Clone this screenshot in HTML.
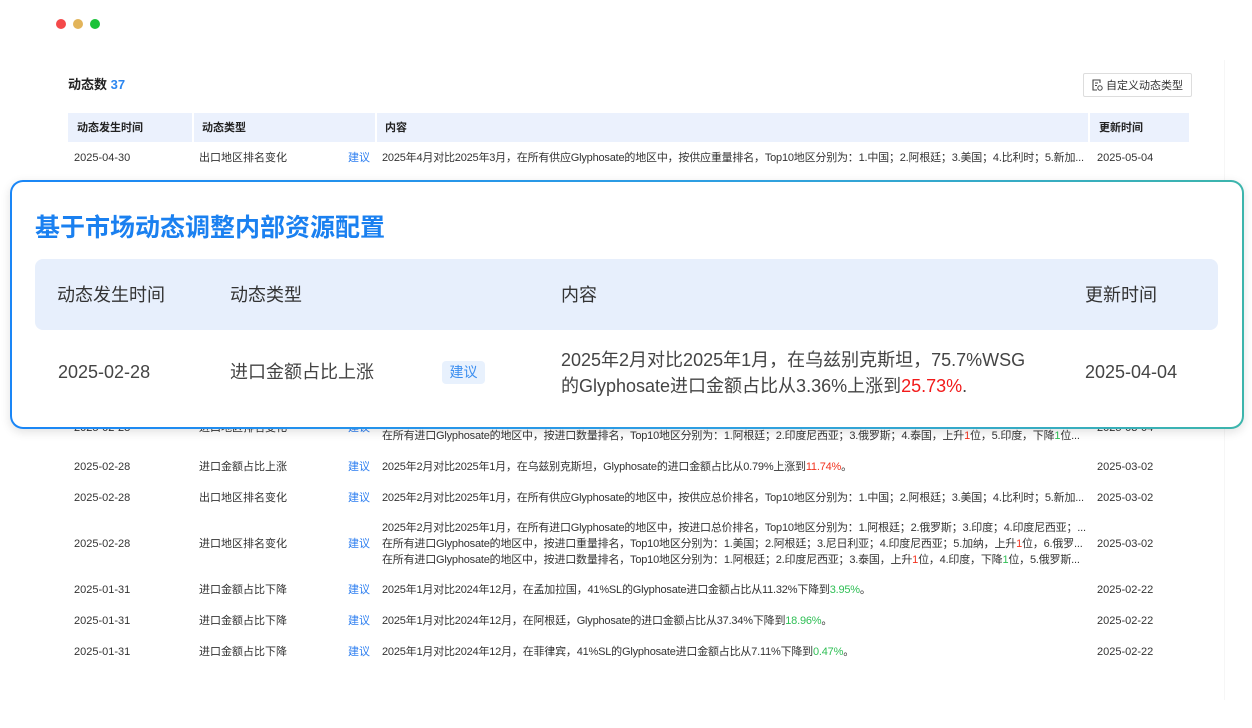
<!DOCTYPE html>
<html><head><meta charset="utf-8">
<style>
*{margin:0;padding:0;box-sizing:border-box}
body{width:1252px;height:728px;background:#fff;position:relative;overflow:hidden;font-family:"Liberation Sans","Noto Sans CJK SC",sans-serif;color:#333}
.a{position:absolute;white-space:nowrap}
.dot{position:absolute;top:19px;width:10px;height:10px;border-radius:50%}
.s{font-size:11px;color:#333;line-height:16px}
.b{font-size:11px;font-weight:bold;color:#222;line-height:16px}
.sug{font-size:11px;color:#2b7df0;line-height:16px}
.c{letter-spacing:-0.2px}
.r{color:#f2321e}.g{color:#2fbf55}
.L{line-height:24px}
.hdr{position:absolute;top:113px;height:29px;background:#ebf1fd}
</style></head><body>
<div class="dot" style="left:56px;background:#f4494a"></div>
<div class="dot" style="left:73px;background:#e2b45a"></div>
<div class="dot" style="left:90px;background:#19c238"></div>
<div style="position:absolute;left:1224px;top:60px;width:1px;height:640px;background:#f6f6f6"></div>

<div class="a" style="left:68px;top:77px;font-size:13px;font-weight:bold;color:#222;line-height:16px">动态数 <span style="color:#2b86f0">37</span></div>
<div class="a" style="left:1083px;top:73px;width:109px;height:24px;border:1px solid #ddd;border-radius:2px;font-size:11px;color:#333;padding:5px 0 0 8px;line-height:13px">
<svg width="11" height="12" viewBox="0 0 11 12" style="vertical-align:-2px"><path d="M8 4V1H1v10h4" fill="none" stroke="#444" stroke-width="1.1"/><path d="M3 4h3M3 6.5h2" stroke="#444"/><circle cx="8" cy="9" r="2.2" fill="none" stroke="#444"/></svg> 自定义动态类型</div>

<div class="hdr" style="left:68px;width:124px"></div>
<div class="hdr" style="left:194px;width:181px"></div>
<div class="hdr" style="left:377px;width:711px"></div>
<div class="hdr" style="left:1090px;width:99px"></div>
<div class="a b" style="left:77px;top:120px">动态发生时间</div>
<div class="a b" style="left:202px;top:120px">动态类型</div>
<div class="a b" style="left:385px;top:120px">内容</div>
<div class="a b" style="left:1099px;top:120px">更新时间</div>

<div class="a s" style="left:74px;top:150px">2025-04-30</div><div class="a s" style="left:199px;top:150px">出口地区排名变化</div><div class="a sug" style="left:348px;top:150px">建议</div><div class="a s c" style="left:382px;top:150px">2025年4月对比2025年3月，在所有供应Glyphosate的地区中，按供应重量排名，Top10地区分别为：1.中国；2.阿根廷；3.美国；4.比利时；5.新加...</div><div class="a s" style="left:1097px;top:150px">2025-05-04</div>

<div class="a s" style="left:74px;top:420px">2025-02-28</div><div class="a s" style="left:199px;top:420px">进口地区排名变化</div><div class="a sug" style="left:348px;top:420px">建议</div><div class="a s c" style="left:382px;top:428px">在所有进口Glyphosate的地区中，按进口数量排名，Top10地区分别为：1.阿根廷；2.印度尼西亚；3.俄罗斯；4.泰国，上升<span class="r">1</span>位，5.印度，下降<span class="g">1</span>位...</div><div class="a s" style="left:1097px;top:420px">2025-03-04</div>

<div class="a s" style="left:74px;top:459px">2025-02-28</div><div class="a s" style="left:199px;top:459px">进口金额占比上涨</div><div class="a sug" style="left:348px;top:459px">建议</div><div class="a s c" style="left:382px;top:459px">2025年2月对比2025年1月，在乌兹别克斯坦，Glyphosate的进口金额占比从0.79%上涨到<span class="r">11.74%</span>。</div><div class="a s" style="left:1097px;top:459px">2025-03-02</div>

<div class="a s" style="left:74px;top:490px">2025-02-28</div><div class="a s" style="left:199px;top:490px">出口地区排名变化</div><div class="a sug" style="left:348px;top:490px">建议</div><div class="a s c" style="left:382px;top:490px">2025年2月对比2025年1月，在所有供应Glyphosate的地区中，按供应总价排名，Top10地区分别为：1.中国；2.阿根廷；3.美国；4.比利时；5.新加...</div><div class="a s" style="left:1097px;top:490px">2025-03-02</div>

<div class="a s" style="left:74px;top:536px">2025-02-28</div><div class="a s" style="left:199px;top:536px">进口地区排名变化</div><div class="a sug" style="left:348px;top:536px">建议</div>
<div class="a s c" style="left:382px;top:520px">2025年2月对比2025年1月，在所有进口Glyphosate的地区中，按进口总价排名，Top10地区分别为：1.阿根廷；2.俄罗斯；3.印度；4.印度尼西亚；...</div>
<div class="a s c" style="left:382px;top:536px">在所有进口Glyphosate的地区中，按进口重量排名，Top10地区分别为：1.美国；2.阿根廷；3.尼日利亚；4.印度尼西亚；5.加纳，上升<span class="r">1</span>位，6.俄罗...</div>
<div class="a s c" style="left:382px;top:552px">在所有进口Glyphosate的地区中，按进口数量排名，Top10地区分别为：1.阿根廷；2.印度尼西亚；3.泰国，上升<span class="r">1</span>位，4.印度，下降<span class="g">1</span>位，5.俄罗斯...</div>
<div class="a s" style="left:1097px;top:536px">2025-03-02</div>

<div class="a s" style="left:74px;top:582px">2025-01-31</div><div class="a s" style="left:199px;top:582px">进口金额占比下降</div><div class="a sug" style="left:348px;top:582px">建议</div><div class="a s c" style="left:382px;top:582px">2025年1月对比2024年12月，在孟加拉国，41%SL的Glyphosate进口金额占比从11.32%下降到<span class="g">3.95%</span>。</div><div class="a s" style="left:1097px;top:582px">2025-02-22</div>

<div class="a s" style="left:74px;top:613px">2025-01-31</div><div class="a s" style="left:199px;top:613px">进口金额占比下降</div><div class="a sug" style="left:348px;top:613px">建议</div><div class="a s c" style="left:382px;top:613px">2025年1月对比2024年12月，在阿根廷，Glyphosate的进口金额占比从37.34%下降到<span class="g">18.96%</span>。</div><div class="a s" style="left:1097px;top:613px">2025-02-22</div>

<div class="a s" style="left:74px;top:644px">2025-01-31</div><div class="a s" style="left:199px;top:644px">进口金额占比下降</div><div class="a sug" style="left:348px;top:644px">建议</div><div class="a s c" style="left:382px;top:644px">2025年1月对比2024年12月，在菲律宾，41%SL的Glyphosate进口金额占比从7.11%下降到<span class="g">0.47%</span>。</div><div class="a s" style="left:1097px;top:644px">2025-02-22</div>

<!-- overlay card -->
<div style="position:absolute;left:10px;top:180px;width:1234px;height:249px;border-radius:13px;background:linear-gradient(90deg,#1a86f6,#2fa0e0 60%,#3cb5ac);box-shadow:0 3px 10px rgba(0,0,0,.12)">
 <div style="position:absolute;left:2px;top:2px;right:2px;bottom:2px;border-radius:11px;background:#fff"></div>
</div>
<div class="a" style="left:35px;top:212px;font-size:25px;font-weight:bold;color:#1a80f0;line-height:32px">基于市场动态调整内部资源配置</div>
<div style="position:absolute;left:35px;top:259px;width:1183px;height:71px;background:#e7effc;border-radius:8px"></div>
<div class="a L" style="left:57px;top:283px;font-size:18px;color:#333">动态发生时间</div>
<div class="a L" style="left:230px;top:283px;font-size:18px;color:#333">动态类型</div>
<div class="a L" style="left:561px;top:283px;font-size:18px;color:#333">内容</div>
<div class="a L" style="left:1085px;top:283px;font-size:18px;color:#333">更新时间</div>
<div class="a L" style="left:58px;top:360px;font-size:18px;color:#444">2025-02-28</div>
<div class="a L" style="left:230px;top:360px;font-size:18px;color:#444">进口金额占比上涨</div>
<div class="a" style="left:442px;top:361px;width:43px;height:23px;background:#e8f1fd;border-radius:4px;font-size:14px;color:#3b8ef0;text-align:center;line-height:23px">建议</div>
<div class="a" style="left:561px;top:347px;font-size:18px;color:#444;line-height:26px">2025年2月对比2025年1月，在乌兹别克斯坦，75.7%WSG<br>的Glyphosate进口金额占比从3.36%上涨到<span style="color:#f21a1a">25.73%</span>.</div>
<div class="a L" style="left:1085px;top:360px;font-size:18px;color:#444">2025-04-04</div>
</body></html>
